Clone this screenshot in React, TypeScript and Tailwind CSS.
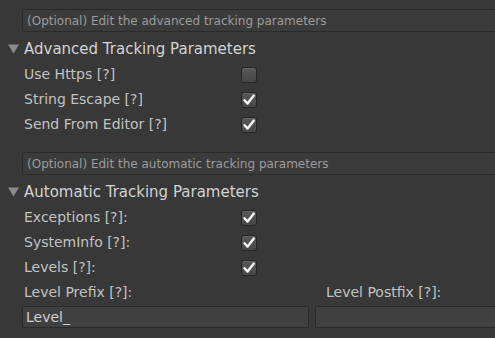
import React from "react";

const font = { fontFamily: '"DejaVu Sans", "Lucida Grande", sans-serif' };

function Check({ on }: { on: boolean }) {
  return (
    <div className="w-[16px] h-[16px] rounded-[3px] border border-[#262626] bg-gradient-to-b from-[#585858] to-[#474747] flex items-center justify-center shadow-[inset_0_1px_0_rgba(255,255,255,0.08)]">
      {on && (
        <svg width="14" height="14" viewBox="0 0 14 14">
          <path d="M2.5 7.2 L5.6 10.6 L11.8 2.6" fill="none" stroke="#f4f4f4" strokeWidth="2.4" strokeLinecap="round" strokeLinejoin="round" />
        </svg>
      )}
    </div>
  );
}

function Row({ label, on }: { label: string; on: boolean }) {
  return (
    <div className="h-[25px] flex items-center pl-[24px]">
      <div className="w-[217px] text-[14px] text-[#c2c2c2]">{label}</div>
      <Check on={on} />
    </div>
  );
}

function HelpBox({ text }: { text: string }) {
  return (
    <div className="ml-[22px] mr-[-6px] h-[23px] rounded-[3px] border border-[#2a2a2a] bg-[#3b3b3b] flex items-center pl-[4px] text-[12px] text-[#9c9c9c]">
      {text}
    </div>
  );
}

function Header({ text }: { text: string }) {
  return (
    <div className="h-[30px] pt-[4px] flex items-center pl-[8px]">
      <svg width="11" height="10" viewBox="0 0 11 10" className="mr-[5px]">
        <path d="M0 0.5 L11 0.5 L5.5 9.5 Z" fill="#8a8a8a" />
      </svg>
      <span className="text-[15px] text-[#d2d2d2]">{text}</span>
    </div>
  );
}

export default function App() {
  return (
    <div className="w-[495px] h-[338px] overflow-hidden bg-[#383838]" style={font}>
      <div className="pt-[9px]">
        <HelpBox text="(Optional) Edit the advanced tracking parameters" />
        <Header text="Advanced Tracking Parameters" />
        <Row label="Use Https [?]" on={false} />
        <Row label="String Escape [?]" on={true} />
        <Row label="Send From Editor [?]" on={true} />
        <div className="h-[15px]" />
        <HelpBox text="(Optional) Edit the automatic tracking parameters" />
        <Header text="Automatic Tracking Parameters" />
        <Row label="Exceptions [?]:" on={true} />
        <Row label="SystemInfo [?]:" on={true} />
        <Row label="Levels [?]:" on={true} />
        <div className="h-[25px] flex items-center pl-[24px] text-[14px] text-[#c2c2c2]">
          <div className="w-[302px]">Level Prefix [?]:</div>
          <div>Level Postfix [?]:</div>
        </div>
        <div className="mt-[1px] flex gap-[6px] pl-[22px] mr-[-6px]">
          <div className="w-[287px] h-[22px] rounded-[2px] border border-[#2a2a2a] bg-[#404040] flex items-center pl-[3px] text-[14px] text-[#cfcfcf]">
            Level_
          </div>
          <div className="flex-1 h-[22px] rounded-[2px] border border-[#2a2a2a] bg-[#404040]" />
        </div>
      </div>
    </div>
  );
}
